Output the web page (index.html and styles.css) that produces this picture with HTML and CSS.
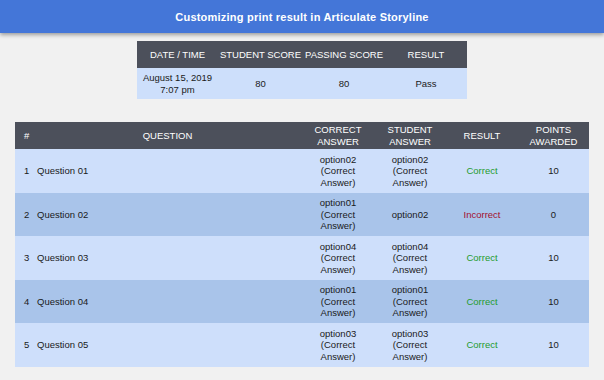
FILE: index.html
```html
<!DOCTYPE html>
<html>
<head>
<meta charset="utf-8">
<link rel="stylesheet" href="styles.css">
</head>
<body>
<header class="topbar">Customizing print result in Articulate Storyline</header>
<main class="content">
  <table class="summary">
    <colgroup>
      <col class="s-c1"><col class="s-c2"><col class="s-c3"><col class="s-c4">
    </colgroup>
    <thead>
      <tr><th>DATE / TIME</th><th>STUDENT SCORE</th><th>PASSING SCORE</th><th>RESULT</th></tr>
    </thead>
    <tbody>
      <tr><td>August 15, 2019<br>7:07 pm</td><td>80</td><td>80</td><td>Pass</td></tr>
    </tbody>
  </table>

  <table class="results">
    <colgroup>
      <col class="r-num"><col class="r-q"><col class="r-a"><col class="r-a"><col class="r-a"><col class="r-p">
    </colgroup>
    <thead>
      <tr>
        <th class="num">#</th>
        <th>QUESTION</th>
        <th>CORRECT ANSWER</th>
        <th>STUDENT ANSWER</th>
        <th>RESULT</th>
        <th>POINTS AWARDED</th>
      </tr>
    </thead>
    <tbody>
      <tr class="light">
        <td class="num">1</td><td class="q">Question 01</td>
        <td>option02 (Correct Answer)</td><td>option02 (Correct Answer)</td>
        <td class="ok">Correct</td><td>10</td>
      </tr>
      <tr class="dark">
        <td class="num">2</td><td class="q">Question 02</td>
        <td>option01 (Correct Answer)</td><td>option02</td>
        <td class="bad">Incorrect</td><td>0</td>
      </tr>
      <tr class="light">
        <td class="num">3</td><td class="q">Question 03</td>
        <td>option04 (Correct Answer)</td><td>option04 (Correct Answer)</td>
        <td class="ok">Correct</td><td>10</td>
      </tr>
      <tr class="dark">
        <td class="num">4</td><td class="q">Question 04</td>
        <td>option01 (Correct Answer)</td><td>option01 (Correct Answer)</td>
        <td class="ok">Correct</td><td>10</td>
      </tr>
      <tr class="light">
        <td class="num">5</td><td class="q">Question 05</td>
        <td>option03 (Correct Answer)</td><td>option03 (Correct Answer)</td>
        <td class="ok">Correct</td><td>10</td>
      </tr>
    </tbody>
  </table>
</main>
</body>
</html>
```
FILE: styles.css
```css
html, body {
  margin: 0;
  padding: 0;
}
body {
  background: #f1f1f1;
  font-family: "Liberation Sans", Arial, sans-serif;
  color: #1a1a1a;
  width: 604px;
  height: 380px;
  overflow: hidden;
}
.topbar {
  height: 33px;
  background: #4476d8;
  color: #ffffff;
  font-weight: bold;
  font-size: 11px;
  letter-spacing: 0.22px;
  display: flex;
  align-items: center;
  justify-content: center;
  box-shadow: 0 2px 4px rgba(0, 0, 0, 0.35);
  position: relative;
}
.content {
  display: flex;
  flex-direction: column;
  align-items: center;
  padding-top: 8px;
}
table {
  border-collapse: collapse;
  table-layout: fixed;
  font-size: 9.5px;
  line-height: 11.5px;
}
th {
  background: #4c505b;
  color: #ffffff;
  font-weight: normal;
  text-align: center;
  padding: 0 4px;
}
td {
  text-align: center;
  padding: 0 8px;
}
.summary {
  width: 330px;
}
.s-c1 { width: 81px; }
.s-c2 { width: 85px; }
.s-c3 { width: 82px; }
.s-c4 { width: 82px; }
.summary th {
  height: 27px;
  padding: 0;
  white-space: nowrap;
}
.summary td {
  background: #cddffb;
  height: 31px;
  padding: 0 2px;
}
.results {
  width: 574px;
  margin-top: 23px;
}
.r-num { width: 18px; }
.r-q { width: 269px; }
.r-a { width: 72px; }
.r-p { width: 71px; }
.results th {
  height: 27px;
}
.results td {
  height: 43.5px;
}
.results .num {
  text-align: left;
  padding: 0 0 0 9px;
}
.results .q {
  text-align: left;
  padding-left: 4px;
}
.light td { background: #cedffb; }
.dark td { background: #a9c4ea; }
.ok { color: #1f9b2e; }
.bad { color: #a3102e; }
```
